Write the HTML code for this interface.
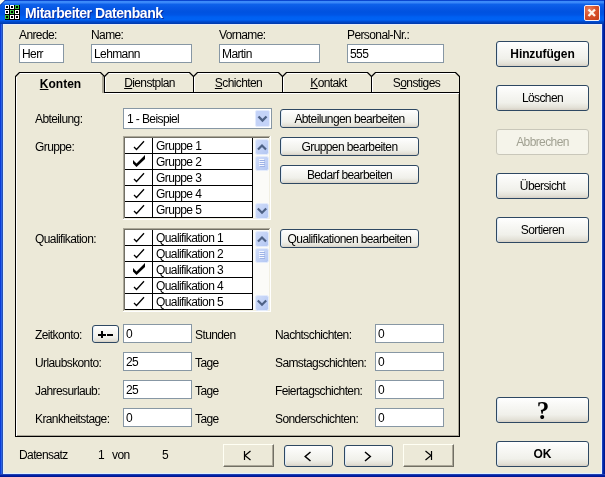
<!DOCTYPE html>
<html><head><meta charset="utf-8">
<style>
html,body{margin:0;padding:0;}
body{-webkit-font-smoothing:antialiased;will-change:transform;width:605px;height:477px;position:relative;overflow:hidden;background:#fff;font-family:"Liberation Sans",sans-serif;font-size:12px;letter-spacing:-0.6px;color:#000;}
.a{position:absolute;}
.t{position:absolute;white-space:nowrap;line-height:13px;font-size:12px;letter-spacing:-0.6px;}
#win{position:absolute;left:0;top:0;width:605px;height:477px;background:#0831D9;overflow:hidden;}
#title{position:absolute;left:0;top:0;width:605px;height:24px;
 background:linear-gradient(to bottom,#0A46D0 0px,#0A46D0 1px,#3D8DFA 1px,#3A86F8 3px,#0E62EA 4px,#0757E4 8px,#0052E0 12px,#0055E6 15px,#0060F2 17px,#0062F4 20px,#0050DA 21px,#0040B8 23px,#0038A8 24px);}
#client{position:absolute;left:3px;top:24px;width:599px;height:450px;background:#ECE9D8;box-sizing:border-box;border:1px solid;border-color:#E8ECF8 #E8F0FF #E0F0FF #DDEEFF;}
.inp{position:absolute;background:#fff;border:1px solid #8797A4;box-sizing:border-box;height:19px;}
.inp span{position:absolute;left:2px;top:3px;line-height:13px;white-space:nowrap;}
.btn{position:absolute;box-sizing:border-box;border:1px solid #2E4862;border-radius:3px;box-shadow:inset 1px 0 0 #E0ECF8;
 background:linear-gradient(to bottom,#FFFFFF 0%,#F8F8F5 30%,#F0F0EA 70%,#E3E1D7 90%,#D6D0C5 100%);text-align:center;white-space:nowrap;}
.btn span{position:absolute;left:0;right:0;line-height:13px;}
.btn.b span{letter-spacing:-0.1px;font-weight:bold;}
.btn.dis{border-color:#C9C7BA;background:#F5F4EA;color:#A1A192;box-shadow:none;}
.cbtn{position:absolute;box-sizing:border-box;background:#ECE9D8;border-style:solid;border-width:1px;border-color:#FFFFF4 #716F64 #716F64 #FFFFF4;box-shadow:inset -1px -1px 0 #ACA899;}
</style></head><body>
<div id="win">
 <div id="title"></div>
 <div class="a" style="left:0;top:24px;width:1px;height:453px;background:#0A3CD8"></div>
 <div class="a" style="left:1px;top:24px;width:1px;height:453px;background:#2A62E4"></div>
 <div class="a" style="left:2px;top:24px;width:1px;height:453px;background:#2850B0"></div>
 <div class="a" style="left:602px;top:24px;width:1px;height:453px;background:#1A40B8"></div>
 <div class="a" style="left:603px;top:24px;width:1px;height:453px;background:#0028A8"></div>
 <div class="a" style="left:604px;top:0;width:1px;height:477px;background:#001890"></div>
 <div class="a" style="left:0;top:474px;width:605px;height:1px;background:#2040B0"></div>
 <div class="a" style="left:0;top:475px;width:605px;height:1px;background:#0020A8"></div>
 <div class="a" style="left:0;top:476px;width:605px;height:1px;background:#001890"></div>
 <div id="client"></div>
</div>
<!-- title bar content -->
<svg class="a" style="left:5px;top:5px" width="15" height="15" viewBox="0 0 15 15" shape-rendering="crispEdges"><rect x="0" y="0" width="15" height="15" fill="#000"/><rect x="0" y="0" width="4" height="4" fill="#FFFFFF"/><rect x="1" y="1" width="2" height="2" fill="#000"/><rect x="5" y="0" width="4" height="4" fill="#FFFFFF"/><rect x="6" y="1" width="2" height="2" fill="#000"/><rect x="10" y="0" width="4" height="4" fill="#3CC43C"/><rect x="11" y="1" width="2" height="2" fill="#000"/><rect x="0" y="5" width="4" height="4" fill="#FFFFFF"/><rect x="1" y="6" width="2" height="2" fill="#000"/><rect x="5" y="5" width="4" height="4" fill="#3CC43C"/><rect x="6" y="6" width="2" height="2" fill="#000"/><rect x="10" y="5" width="4" height="4" fill="#FFFFFF"/><rect x="11" y="6" width="2" height="2" fill="#000"/><rect x="0" y="10" width="4" height="4" fill="#3CC43C"/><rect x="1" y="11" width="2" height="2" fill="#000"/><rect x="5" y="10" width="4" height="4" fill="#FFFFFF"/><rect x="6" y="11" width="2" height="2" fill="#000"/><rect x="10" y="10" width="4" height="4" fill="#FFFFFF"/><rect x="11" y="11" width="2" height="2" fill="#000"/></svg>
<div class="t" style="left:25px;top:5px;font-size:14px;line-height:16px;letter-spacing:-0.45px;font-weight:bold;color:#fff;text-shadow:1px 1px 0 #0A2A9C;">Mitarbeiter Datenbank</div>
<div class="a" style="left:584px;top:5px;width:16px;height:16px;box-sizing:border-box;border:1px solid #F4F0F8;border-radius:2px;background:radial-gradient(circle at 30% 25%,#E8805E 0%,#D9532C 45%,#C43C14 100%);"></div>
<svg class="a" style="left:584px;top:5px" width="16" height="16" viewBox="0 0 16 16"><path d="M4.5 4.5 L11 11 M11 4.5 L4.5 11" stroke="#FFF6EC" stroke-width="2.3" stroke-linecap="butt" fill="none"/></svg>
<svg class="a" style="left:0;top:0" width="6" height="6" viewBox="0 0 6 6"><path d="M0 0 L5 0 L0 5 Z" fill="#F4F6F0"/><path d="M5.5 0 L0 5.5" stroke="#1A3AA0" stroke-width="1"/></svg>

<!-- top fields -->
<div class="t" style="left:19px;top:29px">Anrede:</div>
<div class="t" style="left:91px;top:29px">Name:</div>
<div class="t" style="left:219px;top:29px">Vorname:</div>
<div class="t" style="left:347px;top:29px">Personal-Nr.:</div>
<div class="inp" style="left:19px;top:44px;width:45px"><span>Herr</span></div>
<div class="inp" style="left:91px;top:44px;width:101px"><span>Lehmann</span></div>
<div class="inp" style="left:219px;top:44px;width:101px"><span>Martin</span></div>
<div class="inp" style="left:347px;top:44px;width:97px"><span>555</span></div>


<!-- TABS -->
<svg class="a" style="left:0;top:0" width="605" height="477" viewBox="0 0 605 477">
<g shape-rendering="crispEdges">
<rect x="16" y="77" width="1" height="359" fill="#FFFFFF"/>
<rect x="105" y="93" width="354" height="1" fill="#FFFFFF"/>
<rect x="19" y="73" width="81" height="1" fill="#FFFFFF"/>
<rect x="16" y="77" width="1" height="16" fill="#FFFFFF"/>
<rect x="108" y="73" width="81" height="1" fill="#FFFFFF"/>
<rect x="105" y="77" width="1" height="16" fill="#FFFFFF"/>
<rect x="197" y="73" width="81" height="1" fill="#FFFFFF"/>
<rect x="194" y="77" width="1" height="16" fill="#FFFFFF"/>
<rect x="286" y="73" width="81" height="1" fill="#FFFFFF"/>
<rect x="283" y="77" width="1" height="16" fill="#FFFFFF"/>
<rect x="375" y="73" width="80" height="1" fill="#FFFFFF"/>
<rect x="372" y="77" width="1" height="16" fill="#FFFFFF"/>
<rect x="458" y="94" width="1" height="342" fill="#ACA899"/>
<rect x="17" y="435" width="442" height="1" fill="#ACA899"/>
<rect x="102" y="76" width="2" height="17" fill="#ACA899"/>
<rect x="15" y="76" width="1" height="361" fill="#000"/>
<rect x="15" y="436" width="445" height="1" fill="#000"/>
<rect x="459" y="76" width="1" height="361" fill="#000"/>
<rect x="104" y="92" width="356" height="1" fill="#000"/>
<rect x="19" y="72" width="82" height="1" fill="#000"/>
<rect x="108" y="72" width="82" height="1" fill="#000"/>
<rect x="104" y="76" width="1" height="17" fill="#000"/>
<rect x="197" y="72" width="82" height="1" fill="#000"/>
<rect x="193" y="76" width="1" height="17" fill="#000"/>
<rect x="286" y="72" width="82" height="1" fill="#000"/>
<rect x="282" y="76" width="1" height="17" fill="#000"/>
<rect x="375" y="72" width="81" height="1" fill="#000"/>
<rect x="371" y="76" width="1" height="17" fill="#000"/>
</g>
<path d="M15.5 76.5 L19.5 72.5 M100.5 72.5 L104.5 76.5" stroke="#000" stroke-width="1.1" fill="none"/>
<path d="M104.5 76.5 L108.5 72.5 M189.5 72.5 L193.5 76.5" stroke="#000" stroke-width="1.1" fill="none"/>
<path d="M193.5 76.5 L197.5 72.5 M278.5 72.5 L282.5 76.5" stroke="#000" stroke-width="1.1" fill="none"/>
<path d="M282.5 76.5 L286.5 72.5 M367.5 72.5 L371.5 76.5" stroke="#000" stroke-width="1.1" fill="none"/>
<path d="M371.5 76.5 L375.5 72.5 M455.5 72.5 L459.5 76.5" stroke="#000" stroke-width="1.1" fill="none"/>
</svg>
<div class="t" style="left:16px;width:89px;text-align:center;top:78px;font-weight:bold;letter-spacing:0"><u>K</u>onten</div>
<div class="t" style="left:105px;width:89px;text-align:center;top:77px"><u>D</u>ienstplan</div>
<div class="t" style="left:194px;width:89px;text-align:center;top:77px"><u>S</u>chichten</div>
<div class="t" style="left:284px;width:89px;text-align:center;top:77px"><u>K</u>ontakt</div>
<div class="t" style="left:372px;width:89px;text-align:center;top:77px">S<u>o</u>nstiges</div>
<!-- PANEL -->
<div class="t" style="left:35px;top:113px">Abteilung:</div>
<div class="inp" style="left:123px;top:108px;width:149px;height:21px"><span style="top:4px;left:3px">1 - Beispiel</span></div>
<div class="a" style="left:255px;top:110px;width:15px;height:17px;box-sizing:border-box;border:1px solid #E3EBFD;border-radius:2px;background:#C4D3F8"></div>
<svg class="a" style="left:255px;top:110px" width="15" height="17"><path d="M3.5 6.5 L7.5 10.5 L11.5 6.5" stroke="#4D6185" stroke-width="2.4" fill="none"/></svg>
<div class="btn" style="left:280px;top:109px;width:139px;height:19px"><span style="top:3px">Abteilungen bearbeiten</span></div>
<div class="t" style="left:35px;top:141px">Gruppe:</div>
<svg class="a" style="left:123px;top:136px" width="148" height="84" viewBox="0 0 148 84">
<g shape-rendering="crispEdges">
<rect x="0" y="0" width="148" height="84" fill="#fff"/>
<rect x="0" y="0" width="147" height="1" fill="#ACA899"/>
<rect x="0" y="0" width="1" height="83" fill="#ACA899"/>
<rect x="1" y="1" width="145" height="1" fill="#716F64"/>
<rect x="1" y="1" width="1" height="81" fill="#716F64"/>
<rect x="1" y="82" width="146" height="1" fill="#F1EFE2"/>
<rect x="146" y="1" width="1" height="82" fill="#F1EFE2"/>
<rect x="130" y="2" width="16" height="80" fill="#FBFBF8"/>
<rect x="2" y="17" width="128" height="1" fill="#000"/>
<rect x="2" y="33" width="128" height="1" fill="#000"/>
<rect x="2" y="49" width="128" height="1" fill="#000"/>
<rect x="2" y="65" width="128" height="1" fill="#000"/>
<rect x="2" y="81" width="128" height="1" fill="#000"/>
<rect x="29" y="2" width="1" height="80" fill="#000"/>
<rect x="129" y="2" width="1" height="80" fill="#000"/>
</g>
<path d="M11 11.0 L13.5 13.5 L21 5.2" stroke="#000" stroke-width="1.3" fill="none"/>
<polygon points="10,24.0 13.5,27.5 22,19.0 22,23.0 13.5,31.0 10,27.5" fill="#000"/>
<path d="M11 43.0 L13.5 45.5 L21 37.2" stroke="#000" stroke-width="1.3" fill="none"/>
<path d="M11 59.0 L13.5 61.5 L21 53.2" stroke="#000" stroke-width="1.3" fill="none"/>
<path d="M11 75.0 L13.5 77.5 L21 69.2" stroke="#000" stroke-width="1.3" fill="none"/>
<defs><linearGradient id="sg" x1="0" y1="0" x2="1" y2="1"><stop offset="0" stop-color="#D2DEFA"/><stop offset="1" stop-color="#B2C6F2"/></linearGradient></defs>
<rect x="132.5" y="3.5" width="13" height="15" rx="2" fill="url(#sg)" stroke="#E4ECFC" stroke-width="1"/>
<rect x="132.5" y="20.5" width="13" height="14" rx="2" fill="url(#sg)" stroke="#E4ECFC" stroke-width="1"/>
<rect x="132.5" y="67.5" width="13" height="15" rx="2" fill="url(#sg)" stroke="#E4ECFC" stroke-width="1"/>
<path d="M135 13.5 L139 9.5 L143 13.5" stroke="#4D6185" stroke-width="2.2" fill="none"/>
<path d="M134.8 72.5 L139 76.7 L143.2 72.5" stroke="#4D6185" stroke-width="2.2" fill="none"/>
<rect x="136" y="23" width="5" height="1" fill="#F4F7FE" shape-rendering="crispEdges"/><rect x="137" y="24" width="5" height="1" fill="#9DB2E6" shape-rendering="crispEdges"/>
<rect x="136" y="25" width="5" height="1" fill="#F4F7FE" shape-rendering="crispEdges"/><rect x="137" y="26" width="5" height="1" fill="#9DB2E6" shape-rendering="crispEdges"/>
<rect x="136" y="27" width="5" height="1" fill="#F4F7FE" shape-rendering="crispEdges"/><rect x="137" y="28" width="5" height="1" fill="#9DB2E6" shape-rendering="crispEdges"/>
<rect x="136" y="29" width="5" height="1" fill="#F4F7FE" shape-rendering="crispEdges"/><rect x="137" y="30" width="5" height="1" fill="#9DB2E6" shape-rendering="crispEdges"/>
</svg>
<div class="t" style="left:156px;top:140px">Gruppe 1</div>
<div class="t" style="left:156px;top:156px">Gruppe 2</div>
<div class="t" style="left:156px;top:172px">Gruppe 3</div>
<div class="t" style="left:156px;top:188px">Gruppe 4</div>
<div class="t" style="left:156px;top:204px">Gruppe 5</div>
<div class="btn" style="left:280px;top:137px;width:139px;height:19px"><span style="top:3px">Gruppen bearbeiten</span></div>
<div class="btn" style="left:280px;top:165px;width:139px;height:19px"><span style="top:3px">Bedarf bearbeiten</span></div>
<div class="t" style="left:35px;top:233px">Qualifikation:</div>
<svg class="a" style="left:123px;top:228px" width="148" height="84" viewBox="0 0 148 84">
<g shape-rendering="crispEdges">
<rect x="0" y="0" width="148" height="84" fill="#fff"/>
<rect x="0" y="0" width="147" height="1" fill="#ACA899"/>
<rect x="0" y="0" width="1" height="83" fill="#ACA899"/>
<rect x="1" y="1" width="145" height="1" fill="#716F64"/>
<rect x="1" y="1" width="1" height="81" fill="#716F64"/>
<rect x="1" y="82" width="146" height="1" fill="#F1EFE2"/>
<rect x="146" y="1" width="1" height="82" fill="#F1EFE2"/>
<rect x="130" y="2" width="16" height="80" fill="#FBFBF8"/>
<rect x="2" y="17" width="128" height="1" fill="#000"/>
<rect x="2" y="33" width="128" height="1" fill="#000"/>
<rect x="2" y="49" width="128" height="1" fill="#000"/>
<rect x="2" y="65" width="128" height="1" fill="#000"/>
<rect x="2" y="81" width="128" height="1" fill="#000"/>
<rect x="29" y="2" width="1" height="80" fill="#000"/>
<rect x="129" y="2" width="1" height="80" fill="#000"/>
</g>
<path d="M11 11.0 L13.5 13.5 L21 5.2" stroke="#000" stroke-width="1.3" fill="none"/>
<path d="M11 27.0 L13.5 29.5 L21 21.2" stroke="#000" stroke-width="1.3" fill="none"/>
<polygon points="10,40.0 13.5,43.5 22,35.0 22,39.0 13.5,47.0 10,43.5" fill="#000"/>
<path d="M11 59.0 L13.5 61.5 L21 53.2" stroke="#000" stroke-width="1.3" fill="none"/>
<path d="M11 75.0 L13.5 77.5 L21 69.2" stroke="#000" stroke-width="1.3" fill="none"/>
<defs><linearGradient id="sg" x1="0" y1="0" x2="1" y2="1"><stop offset="0" stop-color="#D2DEFA"/><stop offset="1" stop-color="#B2C6F2"/></linearGradient></defs>
<rect x="132.5" y="3.5" width="13" height="15" rx="2" fill="url(#sg)" stroke="#E4ECFC" stroke-width="1"/>
<rect x="132.5" y="20.5" width="13" height="14" rx="2" fill="url(#sg)" stroke="#E4ECFC" stroke-width="1"/>
<rect x="132.5" y="67.5" width="13" height="15" rx="2" fill="url(#sg)" stroke="#E4ECFC" stroke-width="1"/>
<path d="M135 13.5 L139 9.5 L143 13.5" stroke="#4D6185" stroke-width="2.2" fill="none"/>
<path d="M134.8 72.5 L139 76.7 L143.2 72.5" stroke="#4D6185" stroke-width="2.2" fill="none"/>
<rect x="136" y="23" width="5" height="1" fill="#F4F7FE" shape-rendering="crispEdges"/><rect x="137" y="24" width="5" height="1" fill="#9DB2E6" shape-rendering="crispEdges"/>
<rect x="136" y="25" width="5" height="1" fill="#F4F7FE" shape-rendering="crispEdges"/><rect x="137" y="26" width="5" height="1" fill="#9DB2E6" shape-rendering="crispEdges"/>
<rect x="136" y="27" width="5" height="1" fill="#F4F7FE" shape-rendering="crispEdges"/><rect x="137" y="28" width="5" height="1" fill="#9DB2E6" shape-rendering="crispEdges"/>
<rect x="136" y="29" width="5" height="1" fill="#F4F7FE" shape-rendering="crispEdges"/><rect x="137" y="30" width="5" height="1" fill="#9DB2E6" shape-rendering="crispEdges"/>
</svg>
<div class="t" style="left:156px;top:232px">Qualifikation 1</div>
<div class="t" style="left:156px;top:248px">Qualifikation 2</div>
<div class="t" style="left:156px;top:264px">Qualifikation 3</div>
<div class="t" style="left:156px;top:280px">Qualifikation 4</div>
<div class="t" style="left:156px;top:296px">Qualifikation 5</div>
<div class="btn" style="left:280px;top:229px;width:139px;height:19px"><span style="top:3px">Qualifikationen bearbeiten</span></div>

<div class="t" style="left:35px;top:329px">Zeitkonto:</div>
<div class="btn" style="left:92px;top:325px;width:27px;height:18px"></div>
<svg class="a" style="left:0;top:0" width="120" height="345" shape-rendering="crispEdges"><rect x="98" y="334" width="8" height="2" fill="#000"/><rect x="101" y="331" width="2" height="7" fill="#000"/><rect x="107" y="334" width="6" height="2" fill="#000"/></svg>
<div class="inp" style="left:123px;top:324px;width:69px"><span>0</span></div>
<div class="t" style="left:195px;top:329px">Stunden</div>
<div class="t" style="left:35px;top:357px">Urlaubskonto:</div>
<div class="inp" style="left:123px;top:352px;width:69px"><span>25</span></div>
<div class="t" style="left:195px;top:357px">Tage</div>
<div class="t" style="left:35px;top:385px">Jahresurlaub:</div>
<div class="inp" style="left:123px;top:380px;width:69px"><span>25</span></div>
<div class="t" style="left:195px;top:385px">Tage</div>
<div class="t" style="left:35px;top:413px">Krankheitstage:</div>
<div class="inp" style="left:123px;top:408px;width:69px"><span>0</span></div>
<div class="t" style="left:195px;top:413px">Tage</div>

<div class="t" style="left:275px;top:329px">Nachtschichten:</div>
<div class="inp" style="left:375px;top:324px;width:69px"><span>0</span></div>
<div class="t" style="left:275px;top:357px">Samstagschichten:</div>
<div class="inp" style="left:375px;top:352px;width:69px"><span>0</span></div>
<div class="t" style="left:275px;top:385px">Feiertagschichten:</div>
<div class="inp" style="left:375px;top:380px;width:69px"><span>0</span></div>
<div class="t" style="left:275px;top:413px">Sonderschichten:</div>
<div class="inp" style="left:375px;top:408px;width:69px"><span>0</span></div>

<!-- right buttons -->
<div class="btn b" style="left:496px;top:41px;width:93px;height:26px;"><span style="top:6px">Hinzufügen</span></div>
<div class="btn" style="left:496px;top:85px;width:93px;height:26px"><span style="top:6px">Löschen</span></div>
<div class="btn dis" style="left:496px;top:129px;width:93px;height:26px"><span style="top:6px">Abbrechen</span></div>
<div class="btn" style="left:496px;top:173px;width:93px;height:26px"><span style="top:6px">Übersicht</span></div>
<div class="btn" style="left:496px;top:217px;width:93px;height:26px"><span style="top:6px">Sortieren</span></div>
<div class="btn" style="left:496px;top:397px;width:93px;height:26px;font-weight:bold"><span style="top:3px;left:1px;font-size:25px;line-height:20px;letter-spacing:0;font-family:'Liberation Serif'">?</span></div>
<div class="btn b" style="left:496px;top:441px;width:93px;height:26px;"><span style="top:6px">OK</span></div>

<!-- bottom nav -->
<div class="t" style="left:19px;top:449px">Datensatz</div>
<div class="t" style="left:98px;top:449px">1</div>
<div class="t" style="left:112px;top:449px">von</div>
<div class="t" style="left:162px;top:449px">5</div>
<div class="cbtn" style="left:223px;top:444px;width:51px;height:23px"></div>
<div class="btn" style="left:284px;top:445px;width:49px;height:22px"></div>
<div class="btn" style="left:344px;top:445px;width:49px;height:22px"></div>
<div class="cbtn" style="left:403px;top:444px;width:51px;height:23px"></div>
<svg class="a" style="left:0;top:0" width="605" height="477" viewBox="0 0 605 477">
 <path d="M244.5 451 V460" stroke="#000" stroke-width="1.2" fill="none"/>
 <path d="M250.5 451 L245 455.5 L250.5 460" stroke="#000" stroke-width="1.2" fill="none"/>
 <path d="M310.5 452 L305.2 456.5 L310.5 461" stroke="#000" stroke-width="1.5" fill="none"/>
 <path d="M365 452 L370.3 456.5 L365 461" stroke="#000" stroke-width="1.5" fill="none"/>
 <path d="M431.5 451 V460" stroke="#000" stroke-width="1.2" fill="none"/>
 <path d="M425.5 451 L431 455.5 L425.5 460" stroke="#000" stroke-width="1.2" fill="none"/>
</svg>
</body></html>
